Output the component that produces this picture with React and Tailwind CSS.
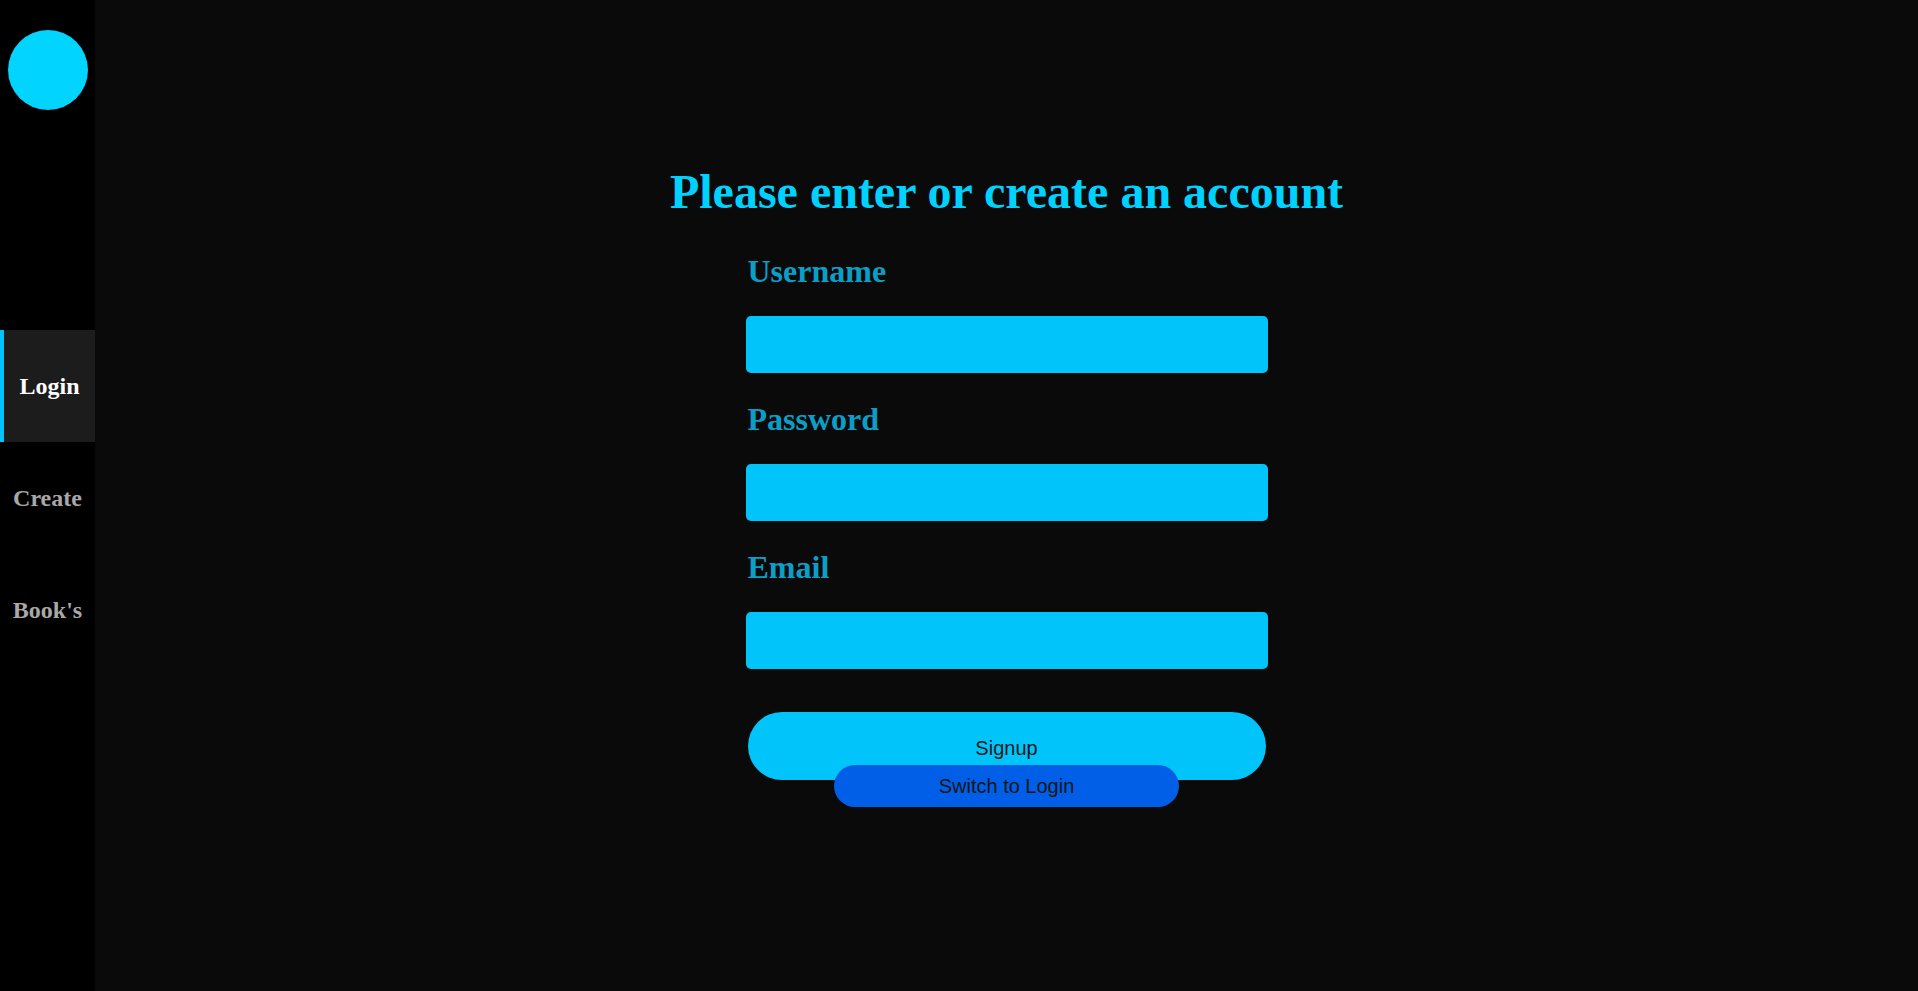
export default function App() {
  const serif = { fontFamily: '"Liberation Serif", "Times New Roman", serif' };
  const sans = { fontFamily: '"Liberation Sans", Arial, sans-serif' };
  const fields = ["Username", "Password", "Email"];
  return (
    <div className="flex h-screen w-full bg-[#0a0a0a]" style={serif}>
      <aside className="flex w-[95px] shrink-0 flex-col bg-black">
        <div className="flex justify-center pt-[30px]">
          <div className="h-[80px] w-[80px] rounded-full bg-[#00d4ff]" />
        </div>
        <nav className="mt-[220px] flex flex-col">
          <div className="flex h-[112px] items-center justify-center border-l-4 border-[#00c4fa] bg-[#1c1c1c] text-[24px] font-bold text-white">
            Login
          </div>
          <div className="flex h-[112px] items-center justify-center text-[24px] font-bold text-[#a8a8a8]">
            Create
          </div>
          <div className="flex h-[112px] items-center justify-center text-[24px] font-bold text-[#a8a8a8]">
            Book's
          </div>
        </nav>
      </aside>
      <main className="flex flex-1 flex-col items-center pt-[164px]">
        <h1 className="text-[48px] font-bold leading-[56px] text-[#00d2ff]">
          Please enter or create an account
        </h1>
        <div className="mt-[33px] flex w-[522px] flex-col">
          {fields.map((f, i) => (
            <div key={f} className={i === 0 ? "flex flex-col" : "mt-[28px] flex flex-col"}>
              <label className="pl-[2px] text-[32px] font-bold leading-[36px] text-[#0b9fc7]">
                {f}
              </label>
              <input
                type={f === "Password" ? "password" : "text"}
                className="mt-[27px] h-[57px] w-full rounded-[5px] bg-[#00c4fa] outline-none"
              />
            </div>
          ))}
          <button
            className="mx-auto mt-[43px] flex h-[68px] w-[518px] items-center justify-center rounded-full bg-[#00c4fa] pt-[4px] text-[20px] text-[#1a1a1a]"
            style={sans}
          >
            Signup
          </button>
          <button
            className="relative mx-auto -mt-[15px] flex h-[42px] w-[345px] items-center justify-center rounded-full bg-[#005fe6] text-[20px] text-[#161616]"
            style={sans}
          >
            Switch to Login
          </button>
        </div>
      </main>
    </div>
  );
}
